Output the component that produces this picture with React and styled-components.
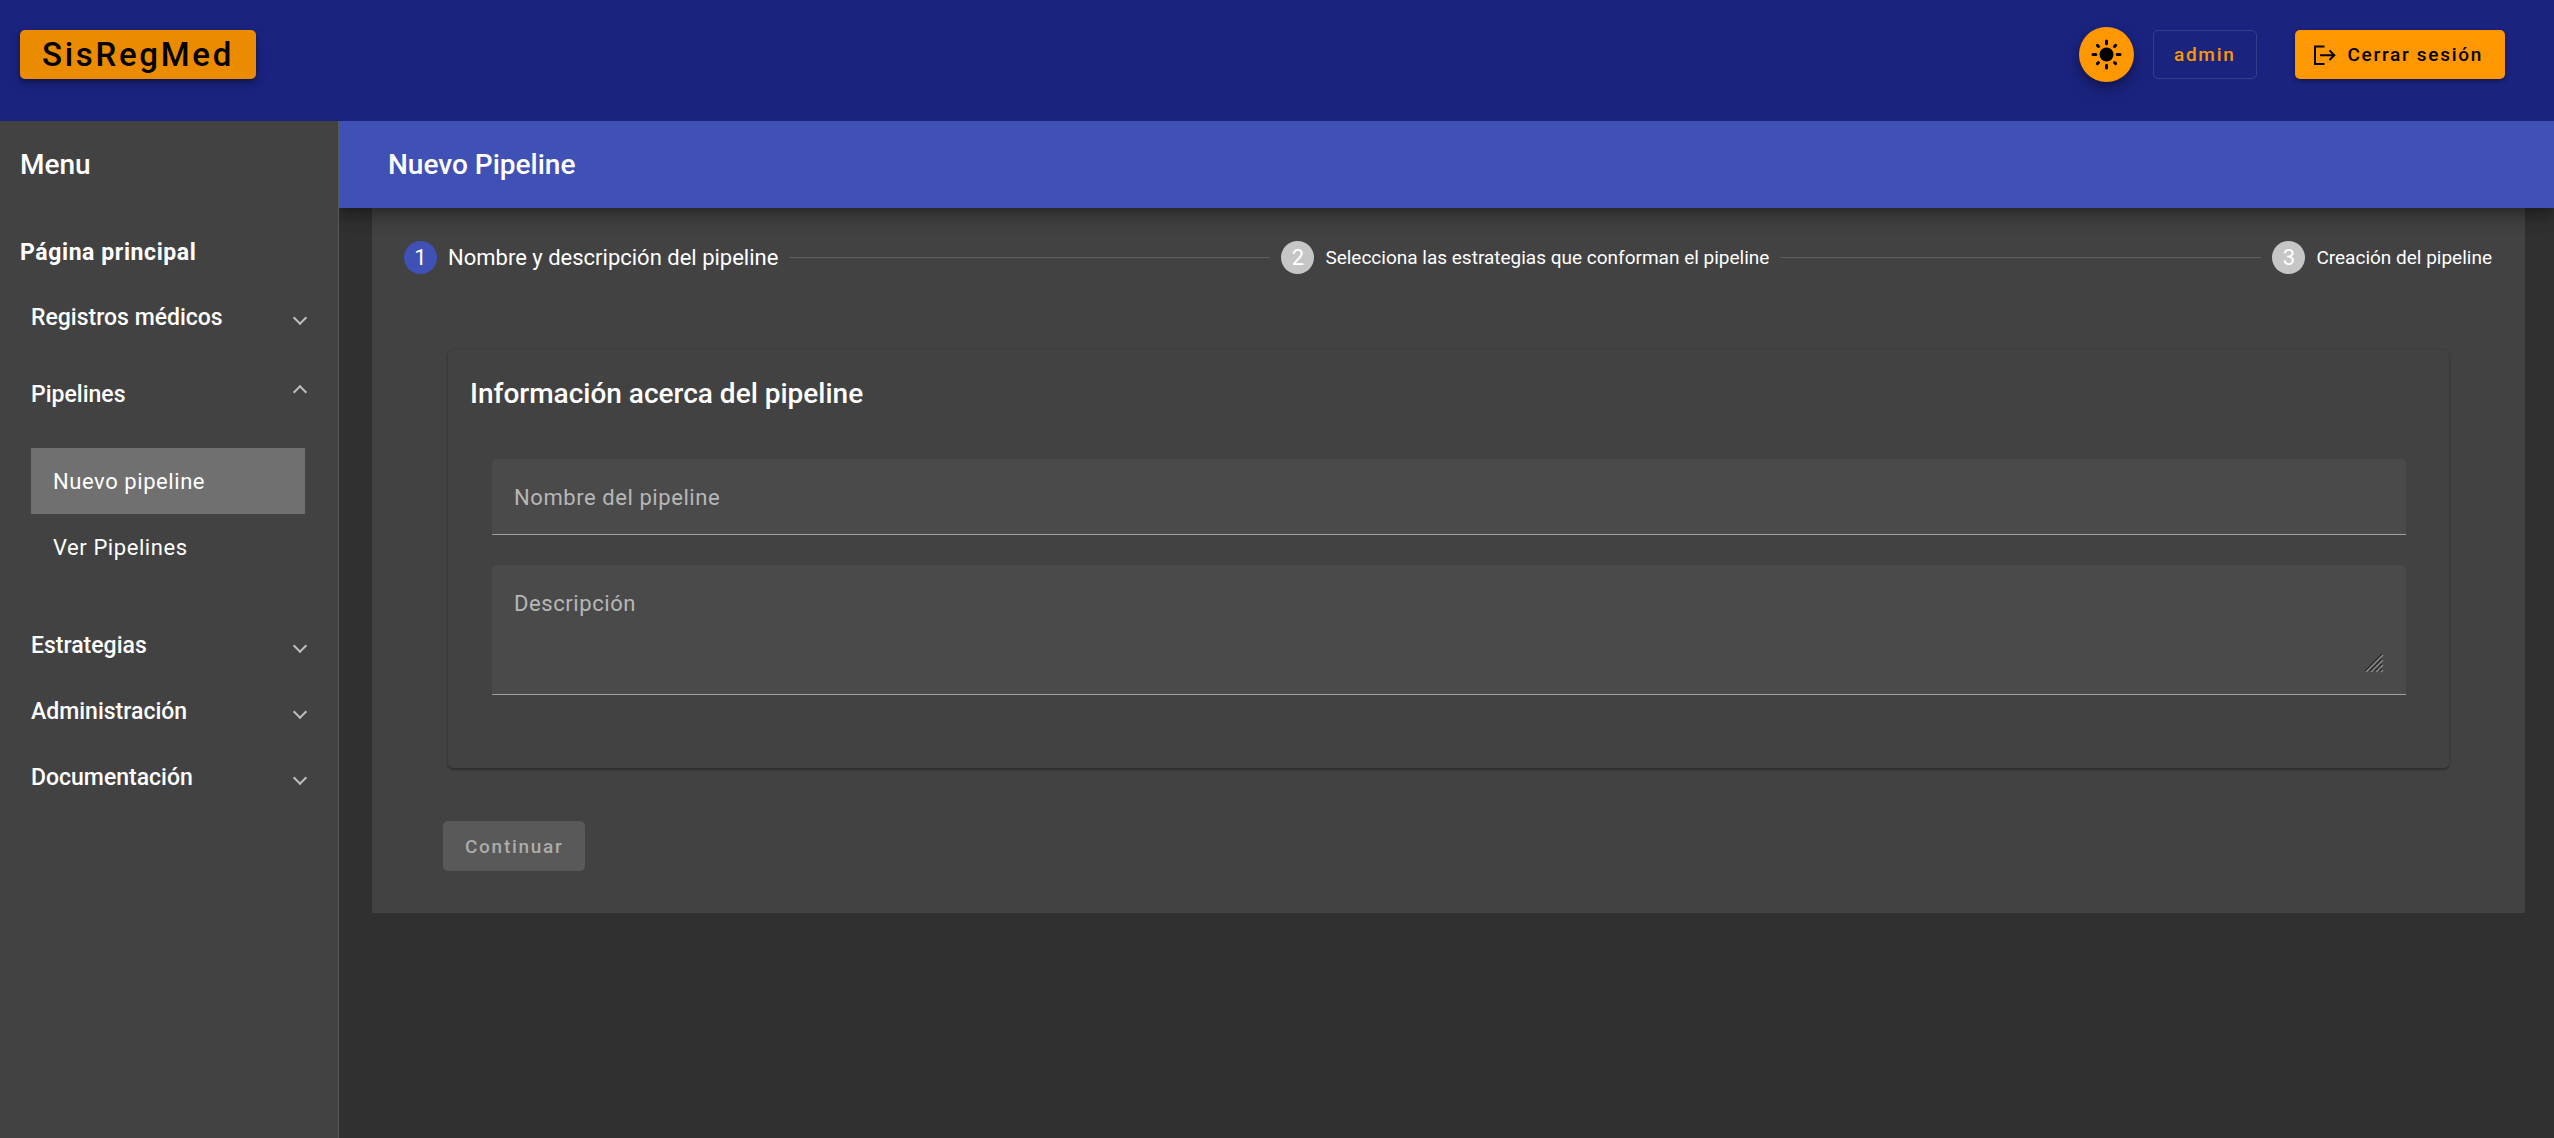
import React, { useState } from "react";
import styled, { createGlobalStyle, css } from "styled-components";

const GlobalStyle = createGlobalStyle`
  *, *::before, *::after { box-sizing: border-box; }
  body {
    margin: 0;
    background: #303030;
    color: #fff;
    font-family: Roboto, "Liberation Sans", sans-serif;
    font-size: 22px;
    line-height: 33px;
  }
  button, input, textarea { font: inherit; color: inherit; }
`;

const Page = styled.div`
  min-height: 100vh;
  display: flex;
  flex-direction: column;
`;

const Header = styled.header`
  display: flex;
  align-items: center;
  height: 121px;
  padding: 0 49px 12px 20px;
  background: #1a237e;
`;

const Button = styled.button`
  display: inline-flex;
  align-items: center;
  height: 49px;
  padding: 0 22px;
  border: 0;
  border-radius: 5px;
  background: #ff9800;
  color: #000;
  font-size: 19px;
  font-weight: 500;
  letter-spacing: 0.09em;
  cursor: pointer;
`;

const Brand = styled(Button)`
  background: #eb8c00;
  font-size: 33px;
  letter-spacing: 0.082em;
  box-shadow: 0 3px 5px rgba(0, 0, 0, 0.3), 0 5px 14px rgba(0, 0, 0, 0.16);
`;

const HeaderActions = styled.div`
  display: flex;
  align-items: center;
  margin-left: auto;
`;

const ThemeToggle = styled.button`
  display: grid;
  place-items: center;
  width: 55px;
  height: 55px;
  padding: 0;
  border: 0;
  border-radius: 50%;
  background: #ff9800;
  color: #000;
  box-shadow: 0 4px 7px rgba(0, 0, 0, 0.25), 0 8px 18px rgba(0, 0, 0, 0.18);
  cursor: pointer;
`;

const UserButton = styled(Button)`
  margin: 0 38px 0 19px;
  padding: 0 21px 0 20px;
  border: 1px solid rgba(255, 255, 255, 0.12);
  background: transparent;
  color: #ff9800;
`;

const LogoutButton = styled(Button)`
  gap: 11px;
  padding: 0 22px 0 17px;
  box-shadow: 0 2px 4px rgba(0, 0, 0, 0.35);
`;

const Body = styled.div`
  flex: 1;
  display: flex;
`;

const Sidebar = styled.aside`
  flex: none;
  width: 339px;
  border-right: 1px solid #595959;
  background: #424242;
`;

const Heading = styled.h1`
  margin: 0;
  font-size: 28px;
  font-weight: 500;
`;

const SidebarTitle = styled(Heading)`
  display: flex;
  align-items: center;
  height: 87px;
  padding: 0 20px 1px;
`;

const HomeLink = styled.a`
  display: flex;
  align-items: center;
  height: 88px;
  padding: 0 20px;
  color: #fff;
  font-size: 23px;
  font-weight: 700;
  letter-spacing: 0.026em;
  text-decoration: none;
`;

const Groups = styled.div`
  padding: 0 33px 0 31px;
  margin-top: -11px;
`;

const GroupHeader = styled.button`
  display: flex;
  align-items: center;
  justify-content: space-between;
  width: 100%;
  height: ${(p) => (p.$open ? 88 : 66)}px;
  padding: 0 0 1px;
  border: 0;
  background: none;
  font-size: 23px;
  font-weight: 500;
  text-align: left;
  cursor: pointer;

  &::after {
    content: "";
    width: 10px;
    height: 10px;
    margin: ${(p) => (p.$open ? "0 0 6px" : "1px 0 0")};
    border: solid #c0c0c0;
    border-width: 0 2px 2px 0;
    transform: rotate(${(p) => (p.$open ? 225 : 45)}deg);
  }
`;

const GroupItems = styled.div`
  padding: 9px 0 33px;
`;

const NavItem = styled.a`
  display: flex;
  align-items: center;
  height: 66px;
  padding: 0 22px;
  color: #fff;
  letter-spacing: 0.026em;
  text-decoration: none;
  ${(p) => p.$active && css`background: #707070;`}
`;

const Main = styled.main`
  flex: 1;
  min-width: 0;
  overflow: hidden;
`;

const TitleBar = styled.div`
  position: relative;
  display: flex;
  align-items: center;
  height: 87px;
  padding: 0 49px 1px;
  background: #3f51b5;
  box-shadow: 0 7px 7px -4px rgba(0, 0, 0, 0.2), 0 11px 14px 1px rgba(0, 0, 0, 0.14),
    0 4px 19px 3px rgba(0, 0, 0, 0.12);
`;

const Panel = styled.section`
  margin: 0 29px 0 33px;
  padding-bottom: 42px;
  background: #424242;
`;

const Stepper = styled.ol`
  display: flex;
  align-items: center;
  gap: 11px;
  height: 99px;
  margin: 0;
  padding: 0 33px 0 32px;
  list-style: none;
`;

const Step = styled.li`
  display: flex;
  align-items: center;
  gap: 11px;
  font-size: ${(p) => (p.$current ? 22 : 19)}px;
  white-space: nowrap;
`;

const StepNumber = styled.span`
  display: grid;
  place-items: center;
  width: 33px;
  height: 33px;
  border-radius: 50%;
  background: ${(p) => (p.$current ? "#3f51b5" : "#c6c6c6")};
  font-size: 22px;
`;

const StepLine = styled.li`
  flex: 1;
  height: 1px;
  background: #5e5e5e;
`;

const Card = styled.div`
  margin: 43px 76px 53px;
  padding: 27px 22px 73px;
  border-radius: 5px;
  background: #424242;
  box-shadow: 0 2px 2px rgba(0, 0, 0, 0.24), 0 0 3px rgba(0, 0, 0, 0.14);
`;

const Fields = styled.div`
  display: grid;
  gap: 30px;
  padding: 49px 21px 0 22px;
`;

const Field = styled.div`
  display: grid;
  padding: 22px 22px 20px;
  border-bottom: 1px solid #a0a0a0;
  border-radius: 5px 5px 0 0;
  background: #4a4a4a;

  > * { grid-area: 1 / 1; }
`;

const FieldLabel = styled.label`
  z-index: 1;
  justify-self: start;
  align-self: start;
  color: #b7b7b7;
  letter-spacing: 0.026em;
  pointer-events: none;
  visibility: ${(p) => (p.$hidden ? "hidden" : "visible")};
`;

const inputStyle = css`
  width: 100%;
  padding: 0;
  border: 0;
  outline: 0;
  background: transparent;
`;

const TextInput = styled.input`
  ${inputStyle}
  height: 33px;
`;

const TextArea = styled.textarea`
  ${inputStyle}
  display: block;
  height: 87px;
  resize: vertical;

  &::-webkit-resizer { background: transparent; }
`;

const Grip = styled.svg`
  align-self: end;
  justify-self: end;
  margin-bottom: 1px;
  pointer-events: none;
`;

const ContinueButton = styled(Button)`
  height: 50px;
  margin-left: 71px;
  background: #595959;
  color: #acacac;
  cursor: default;
`;

function SunIcon() {
  return (
    <svg width="33" height="33" viewBox="0 0 33 33" aria-hidden="true">
      <circle cx="16.5" cy="16.5" r="7" fill="currentColor" />
      <g stroke="currentColor" strokeWidth="3" strokeLinecap="round">
        {[0, 90, 180, 270].map((angle) => (
          <path key={angle} d="M16.5 3v2.8" transform={`rotate(${angle} 16.5 16.5)`} />
        ))}
        {[45, 135, 225, 315].map((angle) => (
          <path key={angle} d="M16.5 3.6v1.6" transform={`rotate(${angle} 16.5 16.5)`} />
        ))}
      </g>
    </svg>
  );
}

function LogoutIcon() {
  return (
    <svg width="24" height="24" viewBox="0 0 24 24" fill="none" stroke="currentColor" strokeWidth="2" aria-hidden="true">
      <path d="M12.5 3.5H3v17.5h9.5M8 12.2h14M17.5 7.4l4.8 4.8-4.8 4.8" />
    </svg>
  );
}

function ResizeGrip() {
  return (
    <Grip width="19" height="19" viewBox="0 0 19 19" aria-hidden="true">
      {[0, 5, 10, 15].map((offset) => (
        <g key={offset}>
          <path d={`M${offset} 17L17 ${offset}`} stroke="#242424" strokeWidth="1.2" />
          <path d={`M${offset + 1} 18L18 ${offset + 1}`} stroke="#8e8e8e" strokeWidth="1.2" />
        </g>
      ))}
    </Grip>
  );
}

const GROUPS = [
  { name: "Registros médicos" },
  { name: "Pipelines", open: true, items: ["Nuevo pipeline", "Ver Pipelines"] },
  { name: "Estrategias" },
  { name: "Administración" },
  { name: "Documentación" },
];

const STEPS = [
  "Nombre y descripción del pipeline",
  "Selecciona las estrategias que conforman el pipeline",
  "Creación del pipeline",
];

export default function App() {
  const [name, setName] = useState("");
  const [description, setDescription] = useState("");

  return (
    <Page>
      <GlobalStyle />
      <Header>
        <Brand type="button">SisRegMed</Brand>
        <HeaderActions>
          <ThemeToggle type="button" aria-label="Cambiar tema">
            <SunIcon />
          </ThemeToggle>
          <UserButton type="button">admin</UserButton>
          <LogoutButton type="button">
            <LogoutIcon />
            Cerrar sesión
          </LogoutButton>
        </HeaderActions>
      </Header>
      <Body>
        <Sidebar>
          <SidebarTitle as="h2">Menu</SidebarTitle>
          <nav>
            <HomeLink href="#inicio">Página principal</HomeLink>
            <Groups>
              {GROUPS.map((group) => (
                <div key={group.name}>
                  <GroupHeader type="button" $open={group.open} aria-expanded={Boolean(group.open)}>
                    {group.name}
                  </GroupHeader>
                  {group.open && (
                    <GroupItems>
                      {group.items.map((item, i) => (
                        <NavItem key={item} href="#pipelines" $active={i === 0}>
                          {item}
                        </NavItem>
                      ))}
                    </GroupItems>
                  )}
                </div>
              ))}
            </Groups>
          </nav>
        </Sidebar>
        <Main>
          <TitleBar>
            <Heading>Nuevo Pipeline</Heading>
          </TitleBar>
          <Panel>
            <Stepper>
              {STEPS.map((label, i) => (
                <React.Fragment key={label}>
                  {i > 0 && <StepLine aria-hidden="true" />}
                  <Step $current={i === 0}>
                    <StepNumber $current={i === 0}>{i + 1}</StepNumber>
                    {label}
                  </Step>
                </React.Fragment>
              ))}
            </Stepper>
            <Card>
              <Heading as="h2">Información acerca del pipeline</Heading>
              <Fields>
                <Field>
                  <FieldLabel htmlFor="nombre" $hidden={name !== ""}>Nombre del pipeline</FieldLabel>
                  <TextInput id="nombre" value={name} onChange={(e) => setName(e.target.value)} />
                </Field>
                <Field>
                  <FieldLabel htmlFor="descripcion" $hidden={description !== ""}>Descripción</FieldLabel>
                  <TextArea id="descripcion" value={description} onChange={(e) => setDescription(e.target.value)} />
                  <ResizeGrip />
                </Field>
              </Fields>
            </Card>
            <ContinueButton type="button" disabled>Continuar</ContinueButton>
          </Panel>
        </Main>
      </Body>
    </Page>
  );
}
